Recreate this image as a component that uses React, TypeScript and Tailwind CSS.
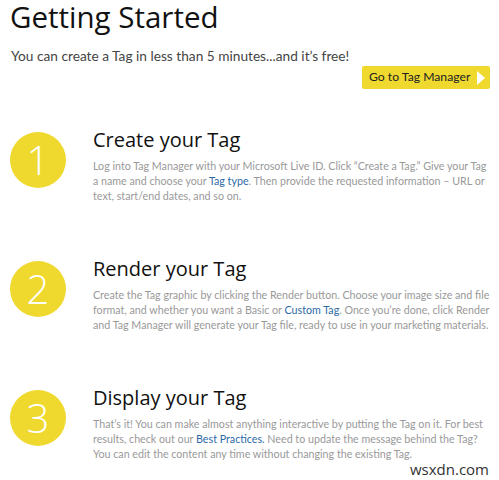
import type { ReactNode } from 'react';

const link = 'text-[#2b6aa6]';

const steps: { n: string; title: string; body: ReactNode }[] = [
  {
    n: '1',
    title: 'Create your Tag',
    body: (
      <>
        Log into Tag Manager with your Microsoft Live ID. Click “Create a Tag.” Give your Tag
        <br />a name and choose your <a className={link}>Tag type</a>. Then provide the requested information – URL or
        <br />
        text, start/end dates, and so on.
      </>
    ),
  },
  {
    n: '2',
    title: 'Render your Tag',
    body: (
      <>
        Create the Tag graphic by clicking the Render button. Choose your image size and file
        <br />
        format, and whether you want a Basic or <a className={link}>Custom Tag</a>. Once you’re done, click Render
        <br />
        and Tag Manager will generate your Tag file, ready to use in your marketing materials.
      </>
    ),
  },
  {
    n: '3',
    title: 'Display your Tag',
    body: (
      <>
        That’s it! You can make almost anything interactive by putting the Tag on it. For best
        <br />
        results, check out our <a className={link}>Best Practices.</a> Need to update the message behind the Tag?
        <br />
        You can edit the content any time without changing the existing Tag.
      </>
    ),
  },
];

export default function App() {
  return (
    <main className="relative h-[480px] w-[499px] overflow-hidden bg-white font-['Open_Sans',sans-serif]">
      <h1 className="pl-[10px] text-[29.5px] leading-[34px] text-[#111]">Getting Started</h1>
      <p className="mt-[13px] pl-[11px] font-['Lato',sans-serif] text-[13.7px] leading-[18px] text-[#444]">
        You can create a Tag in less than 5 minutes...and it’s free!
      </p>
      <div className="mt-[1px] flex justify-end pr-[9px]">
        <button className="flex h-[23px] w-[128px] items-center justify-between whitespace-nowrap rounded-[2px] bg-[#f0d92e] pl-[7px] pr-[5px] font-['Lato',sans-serif] text-[12.2px] text-[#222]">
          Go to Tag Manager
          <svg width="8" height="14" viewBox="0 0 8 14">
            <path d="M0 0 L8 7 L0 14 Z" fill="#fff" />
          </svg>
        </button>
      </div>

      <div className="mt-[38px] flex flex-col">
        {steps.map((s) => (
          <section key={s.n} className="flex h-[129px] items-start">
            <div className="ml-[10px] mt-[5px] flex h-[56px] w-[56px] shrink-0 items-center justify-center rounded-full bg-[#f0d92e] text-[40px] font-light leading-none text-white">
              {s.n}
            </div>
            <div className="ml-[27px]">
              <h2 className="text-[20px] leading-[26px] text-[#111]">{s.title}</h2>
              <p className="mt-[5px] whitespace-nowrap font-['Lato',sans-serif] text-[10.7px] leading-[15px] text-[#999]">
                {s.body}
              </p>
            </div>
          </section>
        ))}
      </div>

      <span className="absolute bottom-0 right-[10px] text-[15px] text-[#333]">wsxdn.com</span>
    </main>
  );
}
